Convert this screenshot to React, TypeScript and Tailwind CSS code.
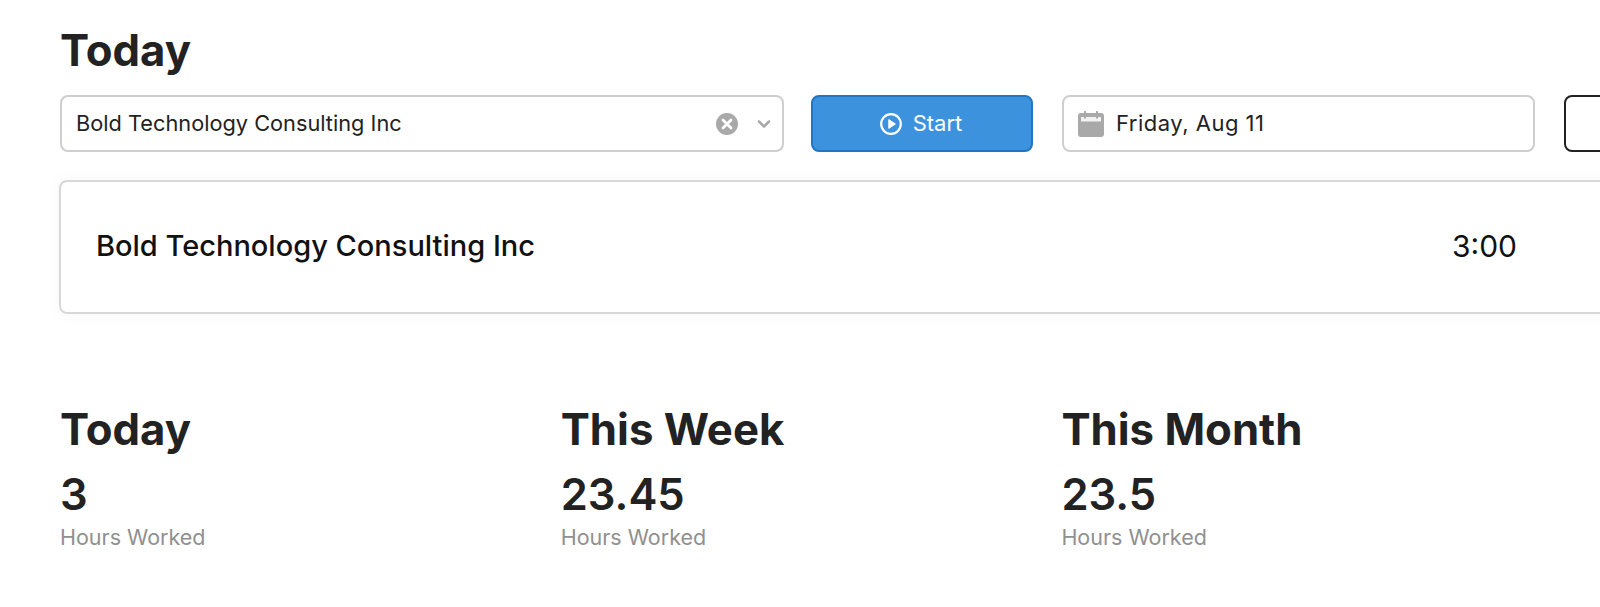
import { ChevronDown } from "lucide-react";

function ClearIcon() {
  return (
    <svg width="22" height="22" viewBox="0 0 22 22" className="shrink-0">
      <circle cx="11" cy="11" r="11" fill="#a9a9a9" />
      <path d="M7 7l8 8M15 7l-8 8" stroke="#fff" strokeWidth="2.8" strokeLinecap="round" />
    </svg>
  );
}

function PlayIcon() {
  return (
    <svg width="22" height="22" viewBox="0 0 22 22" className="shrink-0">
      <circle cx="11" cy="11" r="9.8" fill="none" stroke="#fff" strokeWidth="2.2" />
      <path d="M8.8 6.6l6.6 4.4-6.6 4.4z" fill="#fff" stroke="#fff" strokeWidth="1" strokeLinejoin="round" />
    </svg>
  );
}

function CalendarIcon() {
  return (
    <svg width="26" height="26" viewBox="0 0 26 26" className="shrink-0">
      <rect x="0" y="2" width="26" height="24" rx="3" fill="#a9a9a9" />
      <rect x="3" y="6" width="20" height="4.5" fill="#f2f2f2" />
      <path d="M7 0.8v6M19 0.8v6" stroke="#a9a9a9" strokeWidth="2" strokeLinecap="round" />
    </svg>
  );
}

function Stat({ title, value }: { title: string; value: string }) {
  return (
    <div className="w-[500.7px] shrink-0">
      <div className="text-[43.7px] leading-[51px] font-bold text-[#222222]">{title}</div>
      <div className="mt-[14px] text-[43.5px] leading-[50px] font-semibold text-[#222222]">{value}</div>
      <div className="mt-[4px] text-[21.5px] leading-[28px] text-[#909090]">Hours Worked</div>
    </div>
  );
}

export default function App() {
  return (
    <div className="h-[607px] w-[1600px] overflow-hidden bg-white pl-[60px] font-['Inter',sans-serif]">
      <div className="w-[1700px] pt-[25px]">
        <h1 className="text-[43.7px] leading-[51px] font-bold text-[#222222]">Today</h1>

        <div className="mt-[19px] flex items-stretch">
          <div className="flex h-[57px] w-[724px] items-center rounded-[8px] border-2 border-[#cecece] pr-[8px] pl-[14px] text-[21.75px] text-[#222222]">
            <span className="flex-1">Bold Technology Consulting Inc</span>
            <ClearIcon />
            <ChevronDown size={20} strokeWidth={3} className="ml-[16px] text-[#a9a9a9]" />
          </div>
          <button className="ml-[27px] flex h-[57px] w-[222px] items-center justify-center gap-[11px] rounded-[8px] border-2 border-[#2274c4] bg-[#3d92de] pr-[2px] text-[22px] text-white">
            <PlayIcon />
            Start
          </button>
          <div className="ml-[29px] flex h-[57px] w-[473px] items-center gap-[12px] rounded-[8px] border-2 border-[#cecece] pl-[14px] text-[22px] tracking-[0.5px] text-[#222222]">
            <CalendarIcon />
            Friday, Aug 11
          </div>
          <div className="ml-[29px] h-[57px] w-[120px] rounded-[8px] border-2 border-[#222222]" />
        </div>

        <div className="mt-[28px] -ml-px flex h-[134px] w-[1700px] items-center rounded-[8px] border-2 border-[#d8d8d8] pb-[2px] pl-[35px] text-[29px] font-medium text-[#111111] shadow-[0_0_16px_rgba(0,0,0,0.04)]">
          <span className="w-[1356px]">Bold Technology Consulting Inc</span>
          <span className="text-[30px] font-normal">3:00</span>
        </div>

        <div className="mt-[90px] flex">
          <Stat title="Today" value="3" />
          <Stat title="This Week" value="23.45" />
          <Stat title="This Month" value="23.5" />
        </div>
      </div>
    </div>
  );
}
